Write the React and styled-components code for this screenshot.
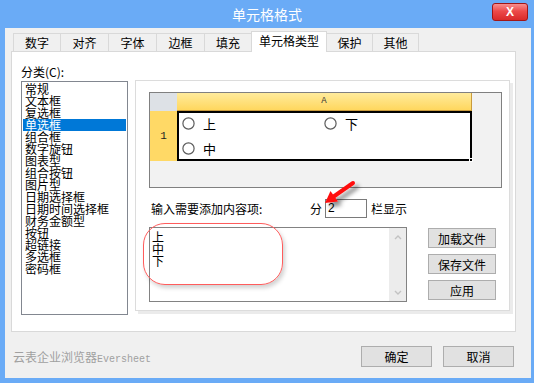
import React from "react";
import styled, { createGlobalStyle } from "styled-components";

const GlobalStyle = createGlobalStyle`
  html, body {
    margin: 0;
    padding: 0;
    background: #6aabf6;
  }
  body {
    font-family: "Noto Sans CJK SC", "Liberation Sans", sans-serif;
    font-size: 12px;
    color: #000;
  }
  * {
    box-sizing: border-box;
  }
`;

const Frame = styled.div`
  width: 534px;
  height: 383px;
  background: #6aabf6;
  display: flex;
  flex-direction: column;
  padding: 0 3px 5px 5px;
  overflow: hidden;
`;

const TitleBar = styled.div`
  height: 28px;
  margin: 0 -3px 0 -5px;
  padding: 0 6px;
  display: grid;
  grid-template-columns: 1fr auto 1fr;
  align-items: center;
`;

const Title = styled.div`
  grid-column: 2;
  color: #fff;
  font-size: 14px;
  line-height: 14px;
  margin-top: -1px;
`;

const CloseButton = styled.div`
  grid-column: 3;
  justify-self: end;
  align-self: start;
  margin-top: 3px;
  width: 36px;
  height: 18px;
  border: 1px solid #a01616;
  border-radius: 3px;
  background: linear-gradient(#f88e8e, #ec4a4a 45%, #d92a2a);
  color: #fff;
  font-family: "Liberation Sans", sans-serif;
  font-weight: bold;
  font-size: 12px;
  line-height: 16px;
  text-align: center;
`;

const Body = styled.div`
  flex: 1;
  background: #f0f0f0;
  padding: 3px 15px 0 6px;
  display: flex;
  flex-direction: column;
`;

const TabStrip = styled.div`
  height: 20px;
  display: flex;
  align-items: flex-end;
  padding-left: 2px;
  position: relative;
  z-index: 1;
`;

const Tab = styled.div`
  width: ${(p) => p.$w}px;
  height: ${(p) => (p.$active ? 21 : 18)}px;
  margin-left: ${(p) => (p.$first ? 0 : -1)}px;
  margin-bottom: ${(p) => (p.$active ? -1 : 0)}px;
  border: 1px solid #d9d9d9;
  border-bottom: none;
  background: ${(p) => (p.$active ? "#fff" : "#f0f0f0")};
  position: relative;
  z-index: ${(p) => (p.$active ? 2 : 1)};
  text-align: center;
  line-height: ${(p) => (p.$active ? 18 : 17)}px;
  white-space: nowrap;
`;

const Panel = styled.div`
  height: 281px;
  border: 1px solid #d9d9d9;
  background: #fff;
  display: flex;
  gap: 7px;
  padding: 13px 5px 0 9px;
`;

const LeftCol = styled.div`
  width: 107px;
  display: flex;
  flex-direction: column;
`;

const CatLabel = styled.div`
  height: 14px;
  line-height: 14px;
`;

const ListBox = styled.div`
  margin-top: 2px;
  height: 234px;
  border: 1px solid #828790;
  padding: 1px;
`;

const ListItem = styled.div`
  height: 12px;
  line-height: 12px;
  padding-left: 2px;
  white-space: nowrap;
  background: ${(p) => (p.$selected ? "#0078d7" : "transparent")};
  color: ${(p) => (p.$selected ? "#fff" : "#000")};
`;

const GroupBox = styled.div`
  position: relative;
  margin-top: 15px;
  width: 375px;
  height: 231px;
  border: 1px solid #dcdcdc;
  box-shadow: 3px 3px 0 #ebebeb;
  padding: 11px 7px 0 13px;
`;

const Preview = styled.div`
  width: 353px;
  height: 96px;
  border: 1px solid #808080;
  background: #f2f2f2;
  display: grid;
  grid-template-columns: 27px 295px;
  grid-template-rows: 18px 50px;
  align-content: start;
`;

const Corner = styled.div`
  background: #dde1e6;
`;

const ColHeader = styled.div`
  background: linear-gradient(#ffeb9c, #ffd75e);
  border-right: 1px solid #c99b3d;
  border-bottom: 1px solid #c99b3d;
  text-align: center;
  font-family: "Liberation Mono", monospace;
  font-size: 9px;
  line-height: 17px;
  color: #333;
`;

const RowHeader = styled.div`
  background: #ffd966;
  display: flex;
  align-items: center;
  justify-content: center;
  font-family: "Liberation Mono", monospace;
  font-size: 11px;
  color: #222;
`;

const Cell = styled.div`
  position: relative;
  background: #fff;
  border: 2px solid #000;
  display: grid;
  grid-template-columns: 142px 142px;
  grid-auto-rows: 20px;
  row-gap: 5px;
  padding-left: 3px;
`;

const FillHandle = styled.div`
  position: absolute;
  right: -3px;
  bottom: -3px;
  width: 4px;
  height: 4px;
  background: #000;
  border: 1px solid #fff;
`;

const RadioItem = styled.div`
  display: flex;
  align-items: center;
  gap: 8px;
  font-size: 13px;
`;

const LabelRow = styled.div`
  margin-top: 11px;
  width: 258px;
  height: 19px;
  display: flex;
  align-items: center;
  justify-content: space-between;
  padding-left: 2px;
`;

const ColsGroup = styled.div`
  display: flex;
  align-items: center;
`;

const ColsInput = styled.div`
  width: 42px;
  height: 19px;
  margin: 0 4px 0 3px;
  border: 1px solid #7a7a7a;
  background: #fff;
  font-family: "Liberation Sans", sans-serif;
  font-size: 12px;
  line-height: 17px;
  padding-left: 2px;
`;

const EditRow = styled.div`
  margin-top: 9px;
  display: flex;
  gap: 21px;
`;

const TextBox = styled.div`
  width: 258px;
  height: 75px;
  border: 1px solid #828282;
  background: #fff;
  display: flex;
  justify-content: space-between;
`;

const Lines = styled.div`
  padding: 3px 0 0 2px;
`;

const Line = styled.div`
  height: 12px;
  line-height: 12px;
`;

const ScrollBar = styled.div`
  width: 17px;
  background: #ececec;
  display: flex;
  flex-direction: column;
  justify-content: space-between;
  align-items: center;
  padding: 7px 0 6px;
`;

const SideButtons = styled.div`
  display: flex;
  flex-direction: column;
  gap: 6px;
  padding-top: 1px;
`;

const Button = styled.div`
  width: ${(p) => p.$w || 68}px;
  height: ${(p) => p.$h || 20}px;
  border: 1px solid #adadad;
  background: #e1e1e1;
  display: flex;
  align-items: center;
  justify-content: center;
`;

const Annotation = styled.div`
  position: absolute;
  left: 7px;
  top: 142px;
  width: 140px;
  height: 62px;
  border: 1.5px solid #ff5c5c;
  border-radius: 22px;
  box-shadow: 2px 3px 4px rgba(0, 0, 0, 0.18);
  pointer-events: none;
`;

const ArrowMark = styled.svg`
  position: absolute;
  left: 180px;
  top: 96px;
  overflow: visible;
`;

const Footer = styled.div`
  flex: 1;
  display: flex;
  align-items: center;
  justify-content: space-between;
  padding: 2px 2px 0 2px;
`;

const Brand = styled.div`
  color: #a0a0a0;
  font-size: 12px;
  display: flex;
  align-items: baseline;
`;

const BrandLatin = styled.span`
  font-family: "Liberation Mono", monospace;
  font-size: 10px;
`;

const FooterButtons = styled.div`
  display: flex;
  gap: 11px;
`;

const tabs = [
  { label: "数字", w: 48 },
  { label: "对齐", w: 49 },
  { label: "字体", w: 49 },
  { label: "边框", w: 49 },
  { label: "填充", w: 48 },
  { label: "单元格类型", w: 76, active: true },
  { label: "保护", w: 47 },
  { label: "其他", w: 47 },
];

const categories = [
  "常规",
  "文本框",
  "复选框",
  "单选框",
  "组合框",
  "数字旋钮",
  "图表型",
  "组合按钮",
  "图片型",
  "日期选择框",
  "日期时间选择框",
  "财务金额型",
  "按钮",
  "超链接",
  "多选框",
  "密码框",
];

const Radio = () => (
  <svg width="13" height="13" viewBox="0 0 13 13">
    <circle cx="6.5" cy="6.5" r="5.6" fill="#fff" stroke="#5c5c5c" strokeWidth="1.2" />
  </svg>
);

const Chevron = ({ up }) => (
  <svg width="8" height="5" viewBox="0 0 8 5">
    <polyline
      points={up ? "1,4 4,1 7,4" : "1,1 4,4 7,1"}
      fill="none"
      stroke="#c2c2c2"
      strokeWidth="1.4"
    />
  </svg>
);

const App = () => {
  return (
    <>
      <GlobalStyle />
      <Frame>
        <TitleBar>
          <Title>单元格格式</Title>
          <CloseButton>X</CloseButton>
        </TitleBar>
        <Body>
          <TabStrip>
            {tabs.map((t, i) => (
              <Tab key={t.label} $w={t.w} $active={t.active} $first={i === 0}>
                {t.label}
              </Tab>
            ))}
          </TabStrip>
          <Panel>
            <LeftCol>
              <CatLabel>分类(C):</CatLabel>
              <ListBox>
                {categories.map((c) => (
                  <ListItem key={c} $selected={c === "单选框"}>
                    {c}
                  </ListItem>
                ))}
              </ListBox>
            </LeftCol>
            <GroupBox>
              <Preview>
                <Corner />
                <ColHeader>A</ColHeader>
                <RowHeader>1</RowHeader>
                <Cell>
                  <RadioItem>
                    <Radio />上
                  </RadioItem>
                  <RadioItem>
                    <Radio />下
                  </RadioItem>
                  <RadioItem>
                    <Radio />中
                  </RadioItem>
                  <FillHandle />
                </Cell>
              </Preview>
              <LabelRow>
                <span>输入需要添加内容项:</span>
                <ColsGroup>
                  <span>分</span>
                  <ColsInput>2</ColsInput>
                  <span>栏显示</span>
                </ColsGroup>
              </LabelRow>
              <EditRow>
                <TextBox>
                  <Lines>
                    <Line>上</Line>
                    <Line>中</Line>
                    <Line>下</Line>
                  </Lines>
                  <ScrollBar>
                    <Chevron up />
                    <Chevron />
                  </ScrollBar>
                </TextBox>
                <SideButtons>
                  <Button>加载文件</Button>
                  <Button>保存文件</Button>
                  <Button>应用</Button>
                </SideButtons>
              </EditRow>
              <Annotation />
              <ArrowMark width="50" height="36" viewBox="0 0 50 36">
                <defs>
                  <filter id="arrowShadow" x="-50%" y="-50%" width="200%" height="200%">
                    <feDropShadow dx="4" dy="4" stdDeviation="2" floodColor="#000" floodOpacity="0.45" />
                  </filter>
                </defs>
                <g filter="url(#arrowShadow)">
                  <line x1="37" y1="6" x2="17" y2="20" stroke="#ff1010" strokeWidth="4" strokeLinecap="round" />
                  <polygon points="9,26 22,24.5 14.5,14" fill="#ff1010" />
                </g>
              </ArrowMark>
            </GroupBox>
          </Panel>
          <Footer>
            <Brand>
              云表企业浏览器<BrandLatin>Eversheet</BrandLatin>
            </Brand>
            <FooterButtons>
              <Button $w={71} $h={21}>确定</Button>
              <Button $w={71} $h={21}>取消</Button>
            </FooterButtons>
          </Footer>
        </Body>
      </Frame>
    </>
  );
};

export default App;
